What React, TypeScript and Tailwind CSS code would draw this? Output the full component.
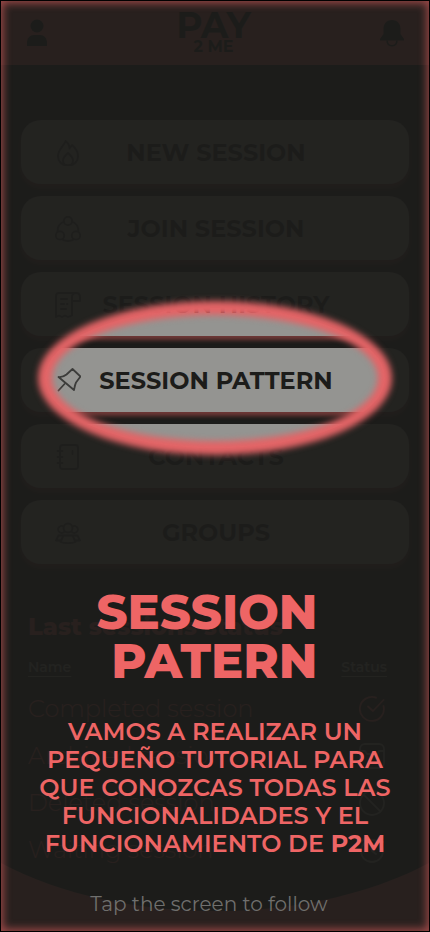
import React from "react";

type IconProps = { children: React.ReactNode };

function LineIcon({ children }: IconProps) {
  return (
    <svg
      viewBox="0 0 26 26"
      className="size-[26px] shrink-0"
      fill="none"
      stroke="currentColor"
      strokeWidth="1.8"
      strokeLinecap="round"
      strokeLinejoin="round"
      aria-hidden="true"
    >
      {children}
    </svg>
  );
}

const flame = (
  <LineIcon>
    <path d="M10.500 1C10 5 3 9 3 16c0 6 4.500 9.500 10 9.500S23 22 23 16c0-4-2.500-8-6-11l-2.500 3.500C14.500 5.500 12.500 2.500 10.500 1Z" />
    <path d="M13 13c-3 2.500-5 4.500-5 7.500s2 5 5 5 5-2 5-5-2-5-5-7.500Z" />
  </LineIcon>
);

const join = (
  <LineIcon>
    <circle cx="13" cy="5" r="4.200" />
    <circle cx="5" cy="19.500" r="4.200" />
    <circle cx="21" cy="19.500" r="4.200" />
    <path d="M9 5.500C5 7 2.500 11 2.500 15.500M17 5.500c4 1.500 6.500 5.500 6.500 10M7.500 23.500c3 2 8 2 11 0" />
  </LineIcon>
);

const receipt = (
  <LineIcon>
    <path d="M22 1H4C2 1 1 2 1 4v21l3-1.500L7 25l3-1.500 3 1.500 4-1.500V5c0-2.500 1.500-4 4-4s4 1.500 4 4v4h-8" />
    <path d="M6 7h6M6 12h3M6 17h5M12 12h.5" />
  </LineIcon>
);

const pin = (
  <LineIcon>
    <path d="M3.500 9c2.500.3 5.500-.5 8-2.500L17.500 1l8 7.500-4.500 6c-1 2-1.500 5-2 7.500Z" />
    <path d="m9.500 16-6 6.500" />
  </LineIcon>
);

const notebook = (
  <LineIcon>
    <rect x="5" y="1" width="18" height="24" rx="2.500" />
    <path d="M2.500 7h5M2.500 13h5M2.500 19h5M17.500 7v3" />
  </LineIcon>
);

const group = (
  <LineIcon>
    <circle cx="13" cy="8" r="4.500" />
    <path d="M8.500 6.500a3.500 3.500 0 1 0 1 5M17.500 6.500a3.500 3.500 0 1 1-1 5" />
    <path d="M8.500 15.500h9l3 6.500c-4 1.500-11 1.500-15 0ZM8 15.500H3.500L1 20.500h5M18 15.500h4.500l2.500 5h-5" />
  </LineIcon>
);

const menuItems = [
  { label: "NEW SESSION", icon: flame },
  { label: "JOIN SESSION", icon: join },
  { label: "SESSION HISTORY", icon: receipt },
  { label: "SESSION PATTERN", icon: pin, active: true },
  { label: "CONTACTS", icon: notebook },
  { label: "GROUPS", icon: group },
];

const statuses = [
  {
    label: "Completed session",
    tone: "text-[#ee6565]",
    icon: (
      <LineIcon>
        <path d="M24.500 10A12 12 0 1 1 17 1.700M9 10.500l5 4.500L24.500 4" />
      </LineIcon>
    ),
  },
  {
    label: "Archived session",
    tone: "text-[#949491]",
    icon: (
      <LineIcon>
        <rect x="1" y="1" width="24" height="24" rx="5" />
        <path d="M1 8h5l2 3h10l2-3h5" />
      </LineIcon>
    ),
  },
  {
    label: "Deleted session",
    tone: "text-[#949491]",
    icon: (
      <LineIcon>
        <circle cx="13" cy="13" r="12" />
        <path d="m4.500 4.500 17 17" />
      </LineIcon>
    ),
  },
  {
    label: "Waiting session",
    tone: "text-[#949491]",
    icon: (
      <LineIcon>
        <circle cx="13" cy="14" r="11" />
        <path d="M13 8v6l4 3M2 5l4-4M24 5l-4-4" />
      </LineIcon>
    ),
  },
];

/* Dims the whole screen except for an ellipse around the active menu entry. */
function Spotlight() {
  return (
    <div
      className="pointer-events-none absolute inset-x-6 -top-10 z-10 h-[140px] rounded-[50%] shadow-[0_0_0_2000px_rgba(28,28,26,0.95)]"
      aria-hidden="true"
    >
      <div className="absolute -inset-[7px] rounded-[50%] border-[14px] border-[#e36466] blur-[3px]" />
    </div>
  );
}

export default function App() {
  return (
    <div className="relative min-h-screen overflow-hidden border border-black bg-[#1c1c1a] font-['Montserrat','Inter',sans-serif] text-[#1c1c1a]">
      <header className="flex h-16 items-center justify-between bg-[#ee6565] pr-6 pl-[25px]">
        <button type="button" aria-label="Profile">
          <svg viewBox="0 0 22 28" className="h-7 w-[22px]" fill="currentColor" aria-hidden="true">
            <circle cx="11" cy="7" r="6.500" />
            <path d="M1 27v-3c0-5 3-8 7-8h6c4 0 7 3 7 8v3Z" />
          </svg>
        </button>
        <div className="flex flex-col items-center pb-1 font-bold">
          <span className="text-4xl leading-8">PAY</span>
          <span className="text-base leading-3">2 ME</span>
        </div>
        <button type="button" aria-label="Notifications">
          <svg viewBox="0 0 26 28" className="h-7 w-[26px]" fill="currentColor" aria-hidden="true">
            <path d="M13 1C7.500 1 4.500 5 4.500 10v5L1 20v1.500h24V20l-3.500-5v-5C21.500 5 18.500 1 13 1Z" />
            <path d="M8 21.500c.5 7 9.500 7 10 0" fill="none" stroke="currentColor" strokeWidth="1.600" />
          </svg>
        </button>
      </header>

      <nav className="mt-[55px] flex flex-col gap-3 px-5">
        {menuItems.map((item) => (
          <div key={item.label} className="relative">
            <button
              type="button"
              className="flex h-16 w-full items-center rounded-[20px] bg-[#949491] px-[34px] pt-0.5 text-2xl font-bold shadow-[0_4px_4px_rgba(238,101,101,0.4)]"
            >
              <span className="flex text-[#3c3c3a]">{item.icon}</span>
              <span className="-ml-6 flex-1 text-center whitespace-nowrap">{item.label}</span>
            </button>
            {item.active && <Spotlight />}
          </div>
        ))}
      </nav>

      <section className="mt-[49px] px-[27px] text-[#ee6565]">
        <h2 className="text-2xl leading-7 font-extrabold">Last sessions status</h2>
        <div className="mt-4 flex justify-between pr-[15px] text-sm leading-5 font-semibold text-[#949491] underline underline-offset-4">
          <span>Name</span>
          <span>Status</span>
        </div>
        <ul className="mt-2">
          {statuses.map((status) => (
            <li key={status.label} className="flex h-[47px] items-center justify-between pr-[17px] text-2xl font-light">
              {status.label}
              <span className={status.tone}>{status.icon}</span>
            </li>
          ))}
        </ul>
      </section>

      <svg
        viewBox="0 0 428 68"
        preserveAspectRatio="none"
        className="absolute inset-x-0 bottom-0 h-[68px] w-full"
        fill="#ee6565"
        aria-hidden="true"
      >
        <path d="M0 0C120 64 308 64 428 0v68H0Z" />
      </svg>

      <div className="absolute inset-0 z-20 flex flex-col items-center justify-end pb-[13px] text-center shadow-[inset_0_0_8px_2px_rgba(238,101,101,0.6)]">
        <h1 className="pr-4 text-right text-5xl leading-[49px] font-extrabold text-[#ee6565]">
          SESSION
          <br />
          PATERN
        </h1>
        <p className="mt-8 text-2xl leading-7 font-semibold whitespace-nowrap text-[#ee6565]">
          VAMOS A REALIZAR UN
          <br />
          PEQUEÑO TUTORIAL PARA
          <br />
          QUE CONOZCAS TODAS LAS
          <br />
          FUNCIONALIDADES Y EL
          <br />
          FUNCIONAMIENTO DE <strong className="font-bold">P2M</strong>
        </p>
        <button type="button" className="mt-8 pr-3 text-xl leading-7 text-[#6f6f6d]">
          Tap the screen to follow
        </button>
      </div>
    </div>
  );
}
